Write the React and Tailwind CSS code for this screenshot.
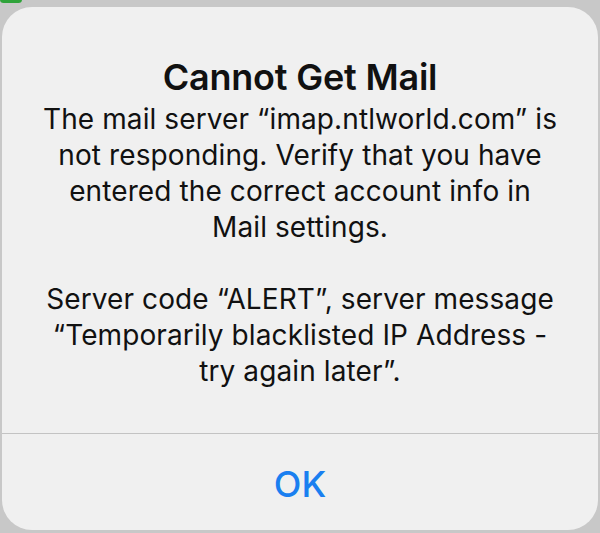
export default function App() {
  return (
    <div
      className="relative w-[600px] h-[533px] bg-[#c8c8c8] pt-[7px] px-[2px] pb-[3px] overflow-hidden"
      style={{ fontFamily: "Inter, 'Noto Sans', sans-serif" }}
    >
      {/* green edge of whatever sits behind the alert */}
      <div className="absolute left-0 top-[-4px] w-[22px] h-[7px] rounded-full bg-[#2fa33a]" />

      <div className="relative h-full bg-[#f0f0f0] rounded-[30px] flex flex-col">
        <div className="h-[426px] flex flex-col items-center pt-[48px] text-center text-[#111]">
          <h1 className="text-[36px] leading-[44px] font-semibold tracking-[-0.2px]">
            Cannot Get Mail
          </h1>
          <p className="mt-[2px] text-[28px] leading-[36px] tracking-[0.1px]">
            The mail server “imap.ntlworld.com” is
            <br />
            not responding. Verify that you have
            <br />
            entered the correct account info in
            <br />
            Mail settings.
            <br />
            <br />
            Server code “ALERT”, server message
            <br />
            “Temporarily blacklisted IP Address -
            <br />
            try again later”.
          </p>
        </div>
        <div className="border-t border-[#c3c3c3] flex-1 flex items-center justify-center">
          <span className="text-[#1a7ff0] text-[36px] font-medium leading-none mt-[4px]">OK</span>
        </div>
      </div>
    </div>
  );
}
